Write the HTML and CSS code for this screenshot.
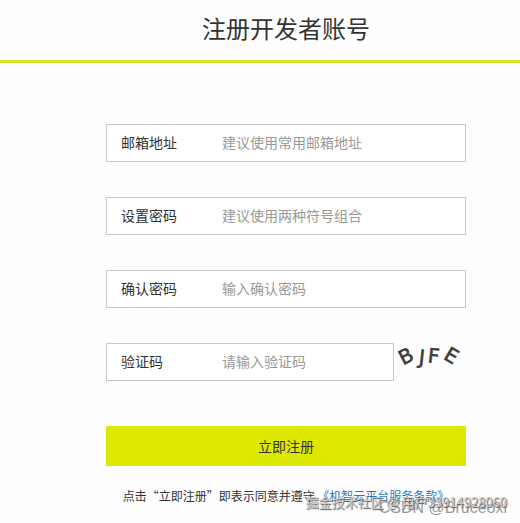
FILE: index.html
```html
<!DOCTYPE html>
<html lang="zh-CN">
<head>
  <meta charset="UTF-8">
  <meta name="viewport" content="width=device-width, initial-scale=1.0">
  <title>注册开发者账号</title>
  <link rel="stylesheet" href="styles.css">
</head>
<body>
  <header>
    <h1>注册开发者账号</h1>
  </header>
  <main>
    <form>
      <div class="field">
        <label for="email">邮箱地址</label>
        <input id="email" type="email" placeholder="建议使用常用邮箱地址">
      </div>
      <div class="field">
        <label for="password">设置密码</label>
        <input id="password" type="password" placeholder="建议使用两种符号组合">
      </div>
      <div class="field">
        <label for="confirm">确认密码</label>
        <input id="confirm" type="password" placeholder="输入确认密码">
      </div>
      <div class="captcha-row">
        <div class="field">
          <label for="captcha">验证码</label>
          <input id="captcha" type="text" placeholder="请输入验证码">
        </div>
        <svg class="captcha" viewBox="0 0 72 38" role="img" aria-label="验证码图片">
          <text x="-7" y="7" transform="translate(12 13) rotate(-27)">B</text>
          <text x="-2" y="7" transform="translate(27 14) rotate(6)">J</text>
          <text x="-6" y="7" transform="translate(40 13) rotate(6)">F</text>
          <text x="-7" y="7" transform="translate(58 13) rotate(30)">E</text>
        </svg>
      </div>
      <button type="submit">立即注册</button>
      <p class="terms">点击“立即注册”即表示同意并遵守 <a href="#">《机智云平台服务条款》</a></p>
    </form>
  </main>
  <div class="watermark csdn">CSDN @Bruceoxl</div>
  <div class="watermark juejin">掘金技术社区 @ 用户33914928060</div>
</body>
</html>
```

FILE: styles.css
```css
* {
  box-sizing: border-box;
}
body {
  margin: 0;
  position: relative;
  min-height: 100vh;
  font-family: 'Noto Sans CJK SC', sans-serif;
  font-size: 14px;
  background: #fefefe;
  color: #333;
}
header {
  padding: 10px 0 14px 52px;
  border-bottom: 3px solid #dbe32b;
  text-align: center;
}
h1 {
  margin: 0;
  font-size: 24px;
  line-height: 36px;
  font-weight: 400;
}
main {
  padding: 61px 0 0 52px;
}
form {
  width: 100%;
  max-width: 360px;
  margin: 0 auto;
}
.field {
  display: flex;
  align-items: center;
  height: 38px;
  margin-bottom: 35px;
  padding: 0 0 2px 14px;
  border: 1px solid #c8c8c8;
  background: white;
}
.field label {
  width: 101px;
}
.field input {
  flex: 1;
  min-width: 0;
  height: 100%;
  padding: 0;
  border: none;
  outline: none;
  background: none;
  font: inherit;
}
.field input::placeholder {
  color: #999;
}
.captcha-row {
  display: flex;
  margin-bottom: 45px;
}
.captcha-row .field {
  flex: 1;
  margin-bottom: 0;
}
.captcha {
  width: 72px;
  height: 38px;
  font-family: 'DejaVu Sans', sans-serif;
  font-size: 20px;
  fill: #3a3d3a;
  stroke: #3a3d3a;
  stroke-width: 0.6;
  overflow: visible;
}
button {
  display: block;
  width: 100%;
  height: 40px;
  padding: 0;
  border: none;
  background: #dde900;
  color: #333;
  font: inherit;
  cursor: pointer;
}
.terms {
  margin: 20px 0 0;
  font-size: 12px;
  line-height: 20px;
  text-align: center;
  white-space: nowrap;
}
.terms a {
  color: #2a7ab8;
  text-decoration: none;
}
/* stamps laid over the lower right corner */
.watermark {
  position: absolute;
  white-space: nowrap;
}
.csdn {
  right: 13px;
  bottom: 3px;
  font-family: 'Liberation Sans', sans-serif;
  font-size: 16px;
  line-height: 24px;
  color: #999;
}
.juejin {
  right: 13px;
  bottom: 11px;
  font-size: 13px;
  line-height: 20px;
  color: #ccc;
  text-shadow: 1px 1px 1px #555;
}
```
